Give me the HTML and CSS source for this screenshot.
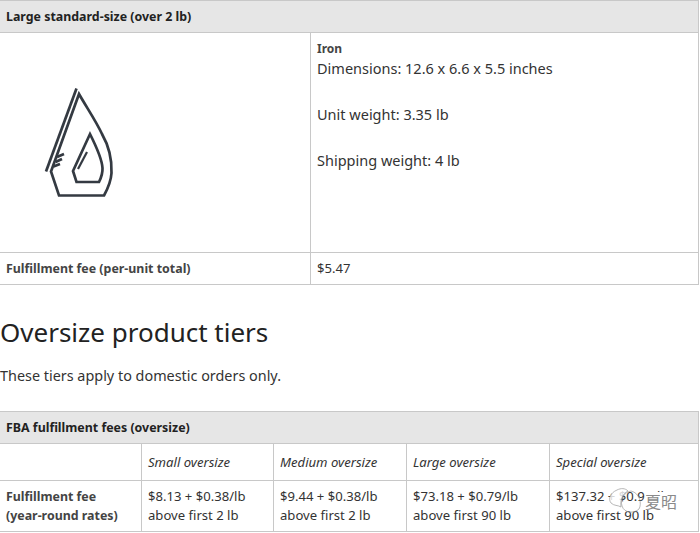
FILE: index.html
```html
<!DOCTYPE html>
<html lang="en">
<head>
<meta charset="utf-8">
<title>FBA fulfillment fees</title>
<link rel="stylesheet" href="styles.css">
</head>
<body>
<table class="fee-table first">
  <colgroup><col class="c-a"><col></colgroup>
  <tr class="head"><th colspan="2">Large standard-size (over 2 lb)</th></tr>
  <tr class="product">
    <td class="icon-cell">
      <svg class="iron" width="72" height="112" viewBox="43 86 72 112" fill="none" stroke="#343a42" stroke-width="2.7">
        <path d="M75.500 88.500 L45 171.500"/>
        <path d="M78 94 C86 108 95 121 101 134 C109 148 111 160 110.500 173 C110 182 106 190 103 195.500 L58 195.500 L50 171.500 Z"/>
        <path d="M63 154 L56 157 M61 159 L54.500 162 M59 164 L52.500 166.500"/>
        <path d="M89 134 C94 144 101 158 101.500 168 C101.800 174 100 178 98 182 L75.500 182 L72 171 Z"/>
        <path d="M86 152 L77 169" stroke-width="2.200"/>
      </svg>
    </td>
    <td class="spec">
      <b class="spec-title">Iron</b>
      <p>Dimensions: 12.6 x 6.6 x 5.5 inches</p>
      <p>Unit weight: 3.35 lb</p>
      <p>Shipping weight: 4 lb</p>
    </td>
  </tr>
  <tr class="fee"><th>Fulfillment fee (per-unit total)</th><td>$5.47</td></tr>
</table>
<h2 class="title">Oversize product tiers</h2>
<p class="intro">These tiers apply to domestic orders only.</p>
<table class="fee-table second">
  <colgroup><col class="c1"><col class="c2"><col class="c3"><col class="c4"><col></colgroup>
  <tr class="head"><th colspan="5">FBA fulfillment fees (oversize)</th></tr>
  <tr class="tiers"><td></td><td><i>Small oversize</i></td><td><i>Medium oversize</i></td><td><i>Large oversize</i></td><td><i>Special oversize</i></td></tr>
  <tr class="rates"><th>Fulfillment fee<br>(year-round rates)</th><td>$8.13 + $0.38/lb<br>above first 2 lb</td><td>$9.44 + $0.38/lb<br>above first 2 lb</td><td>$73.18 + $0.79/lb<br>above first 90 lb</td><td>$137.32 + $0.91/lb<br>above first 90 lb</td></tr>
</table>
<div class="mark">
  <svg width="36" height="28" viewBox="0 0 36 28" fill="none" stroke="#9a9a9a" stroke-width=".7"><path fill="#fff" fill-opacity=".8" d="M8 3 C1 6 -1 12 2 16 C5 19 9 18 12 20 C11 14 13 7 19 4 C16 1 12 1 8 3 Z"/><path d="M22 4 C15 5 11 13 13 19 C15 26 25 27 30 22 C33 17 31 6 22 4 Z"/></svg>
  <span class="mark-text">夏昭</span>
</div>
</body>
</html>
```
FILE: styles.css
```css
html, body { margin: 0; padding: 0; background: #fff; }
body { position: relative; width: 700px; height: 533px; overflow: hidden; font-family: "Noto Sans", sans-serif; font-size: 14.4px; color: #333; }
.fee-table { border-collapse: collapse; table-layout: fixed; width: 700px; margin-left: -1px; font-size: 13.1px; line-height: 19px; }
.fee-table th, .fee-table td { border: 1px solid #c8c8c8; padding: 0 6px; text-align: left; vertical-align: middle; font-weight: 400; }
.fee-table th { font-size: 12.4px; font-weight: 700; color: #444; }
.head th { background: #e6e6e6; color: #222; height: 31px; }
.c-a { width: 311px; }
.product td { height: 219px; vertical-align: top; }
.fee-table .icon-cell { padding: 0; }
.iron { display: block; margin: 53px 0 0 44px; }
.spec-title { display: block; color: #444; font-size: 12px; line-height: 18px; margin-top: 7px; margin-bottom: -1px; }
.spec p { margin: 0 0 23px; font-size: 14.5px; line-height: 23px; }
.fee th, .fee td { height: 31px; }
.title { margin: 29px 0 0; font-size: 26px; line-height: 36px; font-weight: 400; color: #222; }
.intro { margin: 16px 0 0; line-height: 20px; }
.second { margin-top: 25px; }
.c1 { width: 142px; } .c2 { width: 132px; } .c3 { width: 133px; } .c4 { width: 143px; }
.tiers td { height: 36px; }
.rates th, .rates td { height: 50px; }
.mark { position: absolute; left: 609px; top: 487px; display: flex; align-items: center; color: #8a8a8a; font-family: "Noto Sans CJK SC", sans-serif; font-size: 16px; line-height: 18px; }
.mark-text { background: #fff; }
```
